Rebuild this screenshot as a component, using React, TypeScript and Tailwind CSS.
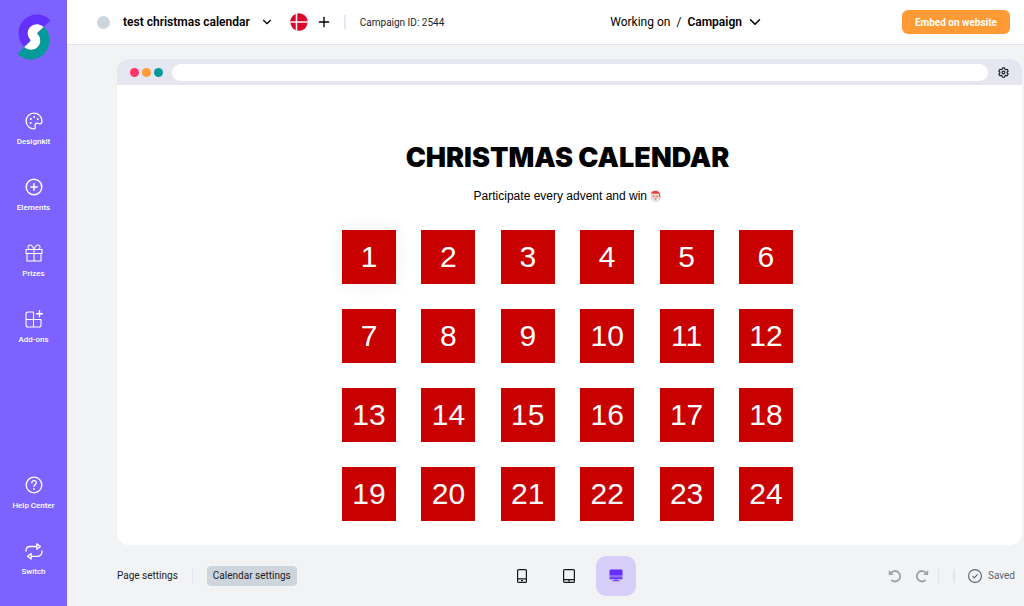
import type { ReactNode } from "react";
import { ChevronDown, Plus } from "lucide-react";

interface NavItem {
  label: string;
  icon: ReactNode;
}

const line = {
  fill: "none",
  stroke: "currentColor",
  strokeWidth: 1.3,
  strokeLinecap: "round" as const,
  strokeLinejoin: "round" as const,
};

const mainNav: NavItem[] = [
  {
    label: "Designkit",
    icon: (
      <svg viewBox="0 0 18 18" className="size-[18px]" {...line}>
        <path d="M9 1.100a7.900 7.900 0 1 0 0 15.800c1.300 0 1.500-.9 1.200-1.900-.7-2.300.1-3.900 2.200-3.900.9 0 1.400.8 2.400.8 1.300 0 2.100-1.400 2.100-2.900C16.900 4.600 13.400 1.100 9 1.100Z" />
        <g fill="currentColor" stroke="none">
          <circle cx="9.200" cy="4.900" r="1" />
          <circle cx="12.700" cy="7" r="1" />
          <circle cx="5.800" cy="6.900" r="1" />
          <circle cx="5.600" cy="11" r="1" />
        </g>
      </svg>
    ),
  },
  {
    label: "Elements",
    icon: (
      <svg viewBox="0 0 18 18" className="size-[18px]" {...line} strokeWidth={1.5}>
        <circle cx="9" cy="9" r="7.800" />
        <path d="M9 5.800v6.400M5.800 9h6.400" />
      </svg>
    ),
  },
  {
    label: "Prizes",
    icon: (
      <svg viewBox="0 0 18 18" className="size-[18px]" {...line} strokeWidth={1.1}>
        <path d="M1 5.500h16v4H1zM2 9.500h14V17H2zM9 5.500V17M9 5.500C8 2.500 6.500 1 5 1S2.600 2.600 3.200 4l1 1.500M9 5.500C10 2.500 11.500 1 13 1s2.400 1.600 1.800 3l-1 1.500" />
      </svg>
    ),
  },
  {
    label: "Add-ons",
    icon: (
      <svg viewBox="0 0 18 18" className="size-[18px]" {...line} strokeWidth={1.1}>
        <path d="M8.500 9.500V2H3a2 2 0 0 0-2 2v11a2 2 0 0 0 2 2h11a2 2 0 0 0 2-2V9.500H1M8.500 9.500V17" />
        <path d="M14.500.8v6M11.500 3.800h6" strokeWidth="1.400" />
      </svg>
    ),
  },
];

const footerNav: NavItem[] = [
  {
    label: "Help Center",
    icon: (
      <svg viewBox="0 0 18 18" className="size-[18px]" {...line}>
        <circle cx="9" cy="9" r="7.800" />
        <path d="M6.800 6.900C6.800 5.500 7.700 4.700 9 4.700s2.300.8 2.300 2.100c0 1.700-2.300 1.800-2.300 3.600" />
        <circle cx="9" cy="12.900" r=".3" />
      </svg>
    ),
  },
  {
    label: "Switch",
    icon: (
      <svg viewBox="0 0 18 18" className="size-[18px]" {...line}>
        <path d="M1 9C1 6.300 2.600 4.500 5.200 4.500H12M11.800 1.800v5.400l3.600-2.700zM17 9c0 3.500-1.600 5.300-4.200 5.300H6M6.200 11.600v5.400l-3.600-2.700z" />
      </svg>
    ),
  },
];

const doors = Array.from({ length: 24 }, (_, i) => i + 1);

function Logo() {
  return (
    <svg viewBox="0 0 34 46" className="h-[46px] w-[34px]" aria-label="Logo">
      <path d="M33.500 6.500C30.500 3 26 .5 20 .5 10 .5 1.500 8.500 1.500 19c0 5.500 2 10 5.500 13.500L27.500 12z" fill="#6430fb" />
      <path d="M26.500 12.500C30.500 16 32.500 20.500 32.500 26c0 10.500-8 19.500-18.500 19.500-5.500 0-10-2-13.500-5.500L20 20z" fill="#049a99" />
      <path d="M26.500 13C24.500 11.200 22.500 10.300 20 10.300c-5.200 0-9.300 3.900-9.300 8.900 0 2.400.9 4.300 2.300 6 .9 1 .8 1.700 0 2.500L7.300 33c2 1.800 4.200 2.700 6.700 2.700 5.200 0 9.200-4 9.200-9.200 0-2.500-.9-4.300-2.300-5.900-.8-.9-.8-1.600 0-2.400z" fill="#fff" />
    </svg>
  );
}

function DanishFlag() {
  return (
    <svg viewBox="0 0 18 18" className="size-[18px]">
      <circle cx="9" cy="9" r="8.700" fill="#dc0428" />
      <path d="M6.500.6v16.800M.3 9h17.400" stroke="#fff" strokeWidth="1.500" />
    </svg>
  );
}

function SantaIcon() {
  return (
    <svg viewBox="0 0 12 14" className="inline-block h-[13px] w-[11px] align-[-3px]" aria-label="Santa">
      <path d="M1 5.500C1 2 3 .8 6.200.8 9.500.8 11.500 3 11.300 8.500L9.500 9z" fill="#ef3b3b" />
      <path d="M1 5h8.500l1.500 4c0 2.500-2 4-4.700 4S1.200 11.500 1.200 9z" fill="#d9d9dc" />
      <path d="M2 4.800h7.400v2.800C9.400 9.600 8 10.500 5.800 10.500S2 9.600 2 7.600z" fill="#f8c9b4" />
      <path d="M1 3.900h8.800v1.400H1zM2.300 9h7l-1.500 3H4z" fill="#e8e8eb" />
      <circle cx="4.200" cy="6.600" r=".6" fill="#6b4a44" />
      <circle cx="7.600" cy="6.600" r=".6" fill="#6b4a44" />
      <path d="M5 9.200h2v1H5z" fill="#d94343" />
    </svg>
  );
}

function GearIcon() {
  return (
    <svg viewBox="0 0 12 12" className="size-[11px]" fill="none" stroke="#20242a" strokeWidth="1.300" strokeLinejoin="round">
      <path d="M4.900.9h2.200l.4 1.500 1 .6 1.500-.5 1.100 1.900L10 5.500v1l1.100 1.100L10 9.500 8.500 9.100l-1 .6-.4 1.500H4.900l-.4-1.500-1-.6-1.500.4L.9 7.600 2 6.500v-1L.9 4.400 2 2.500l1.500.5 1-.6z" />
      <circle cx="6" cy="6" r="1.500" />
    </svg>
  );
}

function UndoIcon() {
  return (
    <svg viewBox="0 0 14 14" className="size-3.5" fill="none" stroke="#9da3ab" strokeWidth="1.900">
      <path d="M2.800 4.200A5.200 5.200 0 1 1 3.400 11" />
      <path d="M.8 1v5h5z" fill="#9da3ab" stroke="none" />
    </svg>
  );
}

function NavButton({ item }: { item: NavItem }) {
  return (
    <button className="flex w-full flex-col items-center gap-1.5 text-white">
      {item.icon}
      <span className="text-[8px] leading-3 font-medium">{item.label}</span>
    </button>
  );
}

function Sidebar() {
  return (
    <nav className="flex w-[67px] shrink-0 flex-col items-center bg-[#7c62ff] pt-3.5 pb-7">
      <Logo />
      <div className="mt-[52px] flex w-full flex-col gap-[30px]">
        {mainNav.map((item) => (
          <NavButton key={item.label} item={item} />
        ))}
      </div>
      <div className="mt-auto flex w-full flex-col gap-[30px]">
        {footerNav.map((item) => (
          <NavButton key={item.label} item={item} />
        ))}
      </div>
    </nav>
  );
}

function Header() {
  return (
    <header className="flex h-[45px] items-center justify-between border-b border-[#e4e3f5] bg-white pr-3.5 pl-[30px] text-black">
      <div className="flex items-center">
        <span className="size-[13px] rounded-full bg-[#cfd5dc]" />
        <button className="ml-[13px] flex items-center gap-2.5 text-xs font-semibold">
          test christmas calendar
          <ChevronDown className="size-3.5" />
        </button>
        <button className="ml-4" aria-label="Denmark">
          <DanishFlag />
        </button>
        <button className="ml-2" aria-label="Add language">
          <Plus className="size-4" />
        </button>
        <span className="ml-3 h-3.5 w-0.5 bg-[#e7e7f5]" />
        <span className="ml-3.5 text-[10px] text-[#22262c]">Campaign ID: 2544</span>
      </div>
      <div className="ml-7 flex items-center gap-1.5 text-xs">
        <span>Working on</span>
        <span>/</span>
        <button className="flex items-center gap-1 font-semibold">
          Campaign
          <ChevronDown className="size-[18px]" />
        </button>
      </div>
      <button className="h-6 rounded-md bg-[#ff9a34] px-[13px] text-[10px] font-bold text-white">
        Embed on website
      </button>
    </header>
  );
}

function Preview() {
  return (
    <section className="flex flex-1 flex-col overflow-hidden rounded-xl bg-white">
      <div className="flex h-[26px] items-center bg-[#e6e6f1] px-[13px]">
        <div className="flex gap-[3px]">
          <span className="size-[9px] rounded-full bg-[#ff3569]" />
          <span className="size-[9px] rounded-full bg-[#ff9a34]" />
          <span className="size-[9px] rounded-full bg-[#049a99]" />
        </div>
        <input
          aria-label="Page address"
          className="mr-2.5 ml-[9px] h-[17px] min-w-0 flex-1 rounded-full bg-white px-3 text-[10px] outline-none"
        />
        <button aria-label="Preview settings">
          <GearIcon />
        </button>
      </div>
      <div className="flex flex-col items-center pt-[57px] pr-1 pb-6 font-['Liberation_Sans',Arial,sans-serif] text-black">
        <h1 className="font-[Inter,sans-serif] text-[27px] leading-8 font-black">
          CHRISTMAS CALENDAR
        </h1>
        <p className="mt-3.5 text-xs leading-4">
          Participate every advent and win <SantaIcon />
        </p>
        <div className="mt-[26px] grid w-[451px] grid-cols-[repeat(6,54px)] justify-between gap-y-[25px]">
          {doors.map((day) => (
            <button
              key={day}
              className="size-[54px] bg-[#c80000] text-3xl text-white first:shadow-[0_0_16px_rgba(0,0,0,0.08)]"
            >
              {day}
            </button>
          ))}
        </div>
      </div>
    </section>
  );
}

function Footer() {
  return (
    <footer className="flex h-[61px] items-center text-[10px] text-[#1c2026]">
      <div className="flex flex-1 items-center">
        <button>Page settings</button>
        <span className="mx-3.5 h-3.5 w-px bg-[#dfe1ee]" />
        <button className="h-5 rounded-sm bg-[#cfd5dc] px-1.5">Calendar settings</button>
      </div>
      <div className="ml-1.5 flex items-center gap-[7px]">
        <button aria-label="Phone" className="grid size-10 place-items-center">
          <svg viewBox="0 0 10 14" className="h-3.5 w-2.5" fill="none" stroke="#16191d" strokeWidth="1.200">
            <rect x=".6" y=".6" width="8.800" height="12.800" rx="1" />
            <path d="M.6 9.800h8.800M4 11.700h2" />
          </svg>
        </button>
        <button aria-label="Tablet" className="grid size-10 place-items-center">
          <svg viewBox="0 0 12 14" className="h-3.5 w-3" fill="none" stroke="#16191d" strokeWidth="1.200">
            <rect x=".6" y=".6" width="10.800" height="12.800" rx="1" />
            <path d="M.6 10.600h10.800M5 12h2" />
          </svg>
        </button>
        <button aria-label="Desktop" className="grid size-10 place-items-center rounded-[10px] bg-[#d7cdf9]">
          <svg viewBox="0 0 14 13" className="h-[13px] w-3.5" fill="#6430fb">
            <path d="M1.500.5h11a1 1 0 0 1 1 1v5H.5v-5a1 1 0 0 1 1-1zM.5 8.200h13v1.300a.8.800 0 0 1-.8.800H7.600v1h2.900v1h-7v-1h2.900v-1H1.300a.8.800 0 0 1-.8-.8z" />
            <path d="M.5 6.500h13v1.700H.5z" opacity=".6" />
          </svg>
        </button>
      </div>
      <div className="flex flex-1 items-center justify-end pr-[7px] text-[#5c6470]">
        <button aria-label="Undo">
          <UndoIcon />
        </button>
        <button aria-label="Redo" className="ml-[13px] -scale-x-100">
          <UndoIcon />
        </button>
        <span className="ml-[9px] h-3.5 w-px bg-[#dfe1ee]" />
        <span className="ml-3.5 h-3.5 w-0.5 bg-[#e3e4f3]" />
        <svg viewBox="0 0 14 14" className="ml-[13px] size-3.5" fill="none" stroke="#5c6470" strokeWidth="1.100">
          <circle cx="7" cy="7" r="6.400" />
          <path d="m4.400 7.200 1.800 1.700 3.400-3.500" />
        </svg>
        <span className="ml-1.5">Saved</span>
      </div>
    </footer>
  );
}

export default function App() {
  return (
    <div className="flex min-h-screen bg-[#f2f3f5] font-[Roboto,sans-serif]">
      <Sidebar />
      <div className="flex min-w-0 flex-1 flex-col">
        <Header />
        <main className="flex flex-1 flex-col pt-3.5 pr-0.5 pl-[50px]">
          <Preview />
          <Footer />
        </main>
      </div>
    </div>
  );
}
